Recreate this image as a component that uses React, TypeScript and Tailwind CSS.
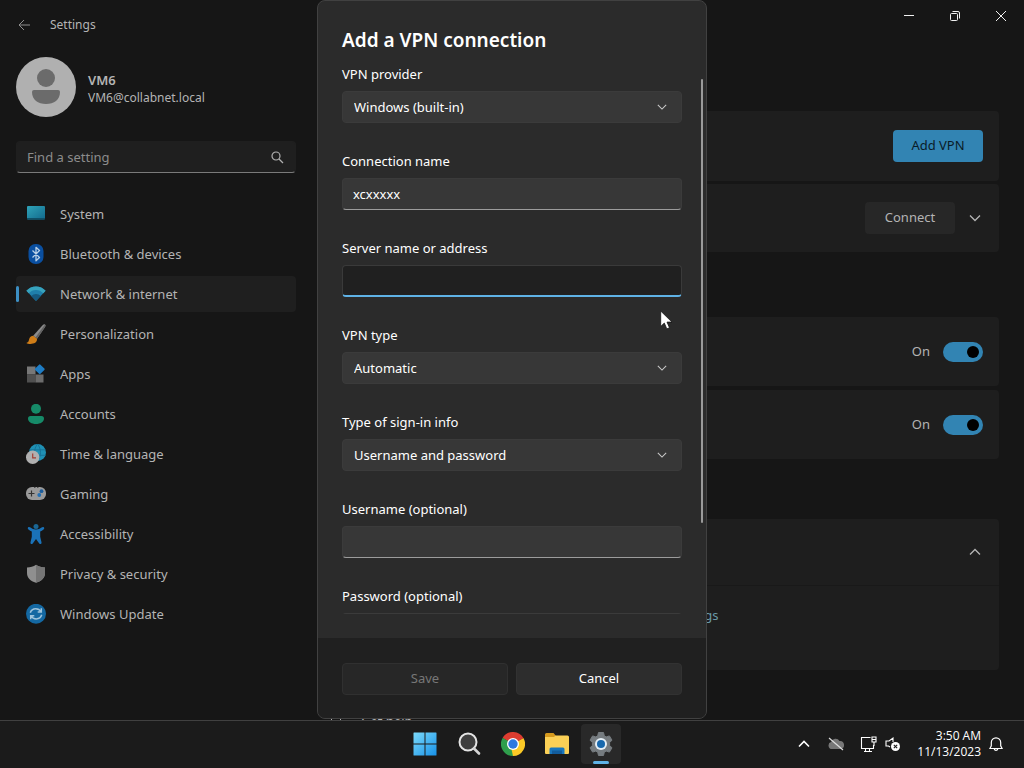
import { useState, type ReactNode } from "react";

const icons: Record<string, ReactNode> = {
  System: (
    <>
      <defs>
        <linearGradient id="sys" x1="0" y1="0" x2="1" y2="1">
          <stop offset="0" stopColor="#2fa3b8" />
          <stop offset="1" stopColor="#12698c" />
        </linearGradient>
      </defs>
      <rect x="1" y="2" width="18" height="13.5" rx="1" fill="url(#sys)" />
      <path d="M1 14h18v.8a.8.8 0 0 1-.8.8H1.800a.8.8 0 0 1-.8-.8z" fill="#0f4f66" />
    </>
  ),
  "Bluetooth & devices": (
    <>
      <rect x="2.500" y="0" width="15" height="20" rx="7" fill="#0a4fa0" />
      <path
        d="M6.500 6.500l7 7-3.500 3.200V3.300l3.500 3.200-7 7"
        fill="none"
        stroke="#b8cfe6"
        strokeWidth="1.300"
        strokeLinejoin="round"
      />
    </>
  ),
  "Network & internet": (
    <>
      <path d="M.4 6.800C3 3.800 6.300 2.400 10 2.400s7 1.400 9.600 4.400L10 17z" fill="#1f7fab" />
      <path d="M.4 6.800C3 3.800 6.300 2.400 10 2.400s7 1.400 9.600 4.400l-2.300 2.500C15.300 7.200 12.800 6 10 6S4.700 7.200 2.700 9.300z" fill="#37a3bd" />
      <path d="M5.200 12C6.500 10.700 8.100 10 10 10s3.500.7 4.800 2L10 17z" fill="#165a80" />
    </>
  ),
  Personalization: (
    <>
      <path d="M18.900.5c1 .7.600 1.800 0 2.800L11 14.800l-3.800-3L16.800 1c.7-.7 1.400-.9 2.100-.5z" fill="#8c8c8c" />
      <path d="M18.900.5c1 .7.600 1.800 0 2.800L11 14.800l-1.600-1.300z" fill="#636363" />
      <path d="M7.200 11.800l3.800 3c.4 3.400-3 5.200-6.500 5.200-1.800 0-3.200-.4-4.100-1.100 2.600-.7 2.200-2.300 3-4.400.7-1.700 2.100-2.600 3.800-2.700z" fill="#cf7d18" />
    </>
  ),
  Apps: (
    <>
      <rect x="1" y="2.500" width="8.500" height="8" fill="#777" />
      <rect x="1" y="10.500" width="8.500" height="8" fill="#505050" />
      <rect x="9.500" y="10.500" width="8" height="8" fill="#6c6c6c" />
      <rect x="10" y="1.500" width="7.500" height="7.500" rx="1" transform="rotate(45 13.750 5.250)" fill="#1e7cc4" />
    </>
  ),
  Accounts: (
    <>
      <circle cx="10" cy="4.800" r="5" fill="#168a68" />
      <path d="M4.500 12h11a2.500 2.500 0 0 1 2.500 2.500c0 3.300-3.500 5.500-8 5.500s-8-2.200-8-5.500A2.500 2.500 0 0 1 4.500 12z" fill="#168a68" />
    </>
  ),
  "Time & language": (
    <>
      <circle cx="11.500" cy="8.500" r="8.500" fill="#1f90b4" />
      <path d="M3.500 5.800h16M3.500 11.300h16M11.500 0c-4 5-4 12 0 17M11.500 0c4 5 4 12 0 17" fill="none" stroke="#156d92" strokeWidth=".8" />
      <circle cx="6.700" cy="13.300" r="6.700" fill="#b0b0b0" />
      <path d="M6.700 9.500v4.300H10" fill="none" stroke="#a33f33" strokeWidth="1.200" />
    </>
  ),
  Gaming: (
    <>
      <rect x="0" y="3" width="20" height="13" rx="6" fill="#9a9a9a" />
      <path d="M5.500 6.500v6M2.500 9.500h6" stroke="#333" strokeWidth="1.200" />
      <circle cx="15.500" cy="7.200" r="1.900" fill="#1c5d9c" />
      <circle cx="13.300" cy="11" r="1.900" fill="#2470b4" />
      <path d="M8 3.400h1.500M11 3.400h1.500" stroke="#444" />
    </>
  ),
  Accessibility: (
    <>
      <circle cx="10" cy="2.600" r="2.500" fill="#1a6694" />
      <path
        d="M2.200 3.200c.7-.5 1.500-.3 2.300.3C6 4.700 7.700 5.500 10 5.500s4-.8 5.500-2c.8-.6 1.600-.8 2.300-.3.700.7.500 1.600-.3 2.300-1.100.9-2.200 1.600-3.300 2.100v5.200l1.300 5.500c.2 1-.3 1.600-1.100 1.700-.8.100-1.400-.3-1.700-1.200L10 15l-2.700 3.800c-.3.900-.9 1.300-1.700 1.200-.8-.1-1.300-.7-1.100-1.700l1.300-5.500V7.600c-1.100-.5-2.200-1.200-3.300-2.100-.8-.7-1-1.600-.3-2.300z"
        fill="#1a72b8"
      />
    </>
  ),
  "Privacy & security": (
    <>
      <path d="M10 .8c2.600 1.800 5.600 2.700 9 2.800v5.300c0 4.600-3.300 8-9 9.900-5.700-1.900-9-5.300-9-9.900V3.600C4.400 3.500 7.400 2.600 10 .8z" fill="#8f8f8f" />
      <path d="M10 .8c2.600 1.800 5.600 2.700 9 2.800v5.300c0 4.600-3.300 8-9 9.900z" fill="#757575" />
    </>
  ),
  "Windows Update": (
    <>
      <circle cx="10" cy="9.800" r="10" fill="#1468a2" />
      <path
        d="M4.300 8.800C5 6.300 7.200 4.700 9.800 4.700c2.300 0 4.200 1.200 5.200 3M15.300 4.300v3.600h-3.600M15.700 10.800c-.7 2.500-2.900 4.100-5.500 4.100-2.300 0-4.200-1.200-5.200-3M4.700 15.300v-3.600h3.600"
        fill="none"
        stroke="#9fc4dc"
        strokeWidth="1.500"
      />
    </>
  ),
};

function Chevron({ up = false, size = 12 }: { up?: boolean; size?: number }) {
  return (
    <svg width={size} height={size} viewBox="0 0 12 12" fill="none" stroke="currentColor" strokeWidth="1.300">
      <path d={up ? "M1 8.500l5-5 5 5" : "M1 3.500l5 5 5-5"} />
    </svg>
  );
}

function SelectField({ id, label, options }: { id: string; label: string; options: string[] }) {
  return (
    <div className="mb-7">
      <label htmlFor={id} className="mb-[7px] block leading-5">
        {label}
      </label>
      <div className="relative">
        <select
          id={id}
          className="block h-8 w-full appearance-none rounded border border-[#3b3b3b] bg-[#373737] px-[11px] pt-px text-white outline-none"
        >
          {options.map((option) => (
            <option key={option}>{option}</option>
          ))}
        </select>
        <span className="pointer-events-none absolute inset-y-0 right-[15px] flex items-center text-[#c8c8c8]">
          <Chevron size={10} />
        </span>
      </div>
    </div>
  );
}

type TextFieldProps = {
  id: string;
  label: string;
  type?: string;
  value: string;
  active?: boolean;
  onChange: (value: string) => void;
};

function TextField({ id, label, type = "text", value, active = false, onChange }: TextFieldProps) {
  return (
    <div className="mb-7">
      <label htmlFor={id} className="mb-[7px] block leading-5">
        {label}
      </label>
      <input
        id={id}
        type={type}
        value={value}
        onChange={(e) => onChange(e.target.value)}
        className={`block h-8 w-full rounded border px-[10px] text-white outline-none ${
          active
            ? "border-[#3a3a3a] border-b-2 border-b-[#5fb2e6] bg-[#202020]"
            : "border-[#3b3b3b] border-b-[#9c9c9c] bg-[#373737]"
        }`}
      />
    </div>
  );
}

function Toggle({ id }: { id: string }) {
  const [on, setOn] = useState(true);

  return (
    <>
      <label htmlFor={id} className="mr-[13px]">
        {on ? "On" : "Off"}
      </label>
      <input
        id={id}
        type="checkbox"
        role="switch"
        checked={on}
        onChange={() => setOn(!on)}
        className="flex h-5 w-10 appearance-none items-center rounded-full bg-[#555] px-1 before:block before:size-3 before:rounded-full before:bg-black checked:justify-end checked:bg-[#3284b3]"
      />
    </>
  );
}

function Sidebar() {
  const [search, setSearch] = useState("");
  const [current, setCurrent] = useState("Network & internet");

  return (
    <aside className="w-[312px] shrink-0 px-4 text-[#b4b4b4]">
      <div className="flex h-12 items-center gap-5 pt-px">
        <button type="button" aria-label="Back" className="flex w-[14px] justify-end">
          <svg className="shrink-0" width="12" height="12" viewBox="0 0 12 12" fill="none" stroke="#8f8f8f">
            <path d="M12 6H1M6 1L1 6l5 5" />
          </svg>
        </button>
        <span className="text-xs">Settings</span>
      </div>

      <div className="mt-[9px] flex items-center gap-3">
        <svg width="60" height="60" viewBox="0 0 60 60">
          <circle cx="30" cy="30" r="30" fill="#b0b0b0" />
          <circle cx="30" cy="21" r="9" fill="#6b6b6b" />
          <path d="M18 33h24a2 2 0 0 1 2 2c0 8-6 12-14 12s-14-4-14-12a2 2 0 0 1 2-2z" fill="#6b6b6b" />
        </svg>
        <div className="pt-[2px]">
          <p className="leading-5 font-semibold">VM6</p>
          <p className="text-xs leading-4">VM6@collabnet.local</p>
        </div>
      </div>

      <div className="relative mt-6">
        <input
          type="search"
          aria-label="Find a setting"
          placeholder="Find a setting"
          value={search}
          onChange={(e) => setSearch(e.target.value)}
          className="block h-8 w-full rounded border border-[#1f1f1f] border-b-[#7a7a7a] bg-[#1f1f1f] px-[10px] outline-none placeholder:text-[#8c8c8c]"
        />
        <svg
          className="pointer-events-none absolute top-[10px] right-3"
          width="13"
          height="13"
          viewBox="0 0 13 13"
          fill="none"
          stroke="#b0b0b0"
          strokeWidth="1.200"
        >
          <circle cx="5" cy="5" r="4" />
          <path d="M8 8l4 4" />
        </svg>
      </div>

      <nav className="mt-[23px] flex flex-col gap-1">
        {Object.keys(icons).map((name) => (
          <a
            key={name}
            href="#"
            onClick={() => setCurrent(name)}
            className={`relative flex h-9 items-center gap-[14px] rounded px-[10px] ${
              name === current ? "bg-[#1f1f1f]" : ""
            }`}
          >
            {name === current && (
              <span className="absolute left-0 h-4 w-[3px] rounded-full bg-[#3c8fc4]" />
            )}
            <svg width="20" height="20" viewBox="0 0 20 20">
              {icons[name]}
            </svg>
            <span className="pt-px">{name}</span>
          </a>
        ))}
      </nav>
    </aside>
  );
}

function Content() {
  const card = "flex items-center justify-end rounded bg-[#1e1e1e]";

  return (
    <section className="min-w-0 flex-1 pr-[25px] pl-4 text-[#b4b4b4]">
      <div className="mt-[111px] flex flex-col gap-[3px]">
        <div className={`${card} h-[70px] pr-4`}>
          <button type="button" className="h-8 w-[90px] rounded bg-[#3284b3] text-[#0a1c28]">
            Add VPN
          </button>
        </div>
        <div className={`${card} h-[68px] pr-[18px]`}>
          <button type="button" className="h-8 w-[90px] rounded bg-[#272727]">
            Connect
          </button>
          <button type="button" aria-label="Show details" className="ml-[14px]">
            <Chevron />
          </button>
        </div>
      </div>

      <div className="mt-[65px] flex flex-col gap-1">
        <div className={`${card} h-[69px] pr-4`}>
          <Toggle id="metered" />
        </div>
        <div className={`${card} h-[69px] pr-4`}>
          <Toggle id="roaming" />
        </div>
      </div>

      <div className="mt-[60px] rounded bg-[#1e1e1e]">
        <div className="flex h-[67px] items-center justify-end border-b border-[#191919] pr-[18px]">
          <button type="button" aria-label="Hide details">
            <Chevron up />
          </button>
        </div>
        <div className="h-[84px] pt-5 pl-[313px]">
          <a href="#" className="text-[#6a9aa8]">
            VPN settings
          </a>
        </div>
      </div>

      <a href="#" className="mt-[42px] ml-[2px] flex items-center gap-[19px]">
        <svg width="12" height="16" viewBox="0 0 12 16" fill="none" stroke="currentColor">
          <path d="M1.500 15.500V3A2.500 2.500 0 0 1 4 .5h4A2.500 2.500 0 0 1 10.500 3v12.500z" />
        </svg>
        Get help
      </a>
    </section>
  );
}

function VpnDialog() {
  const [name, setName] = useState("xcxxxxx");
  const [server, setServer] = useState("");
  const [username, setUsername] = useState("");
  const [password, setPassword] = useState("");

  return (
    <div className="absolute inset-0 flex justify-center pb-px">
      <form
        role="dialog"
        aria-labelledby="vpn-title"
        onSubmit={(e) => e.preventDefault()}
        className="relative flex w-[390px] flex-col overflow-hidden rounded-lg border border-[#414141] bg-[#2b2b2b] text-white"
      >
        <h1 id="vpn-title" className="px-6 pt-[25px] text-[19px] leading-7 font-semibold">
          Add a VPN connection
        </h1>

        <div className="mt-[10px] mb-6 min-h-0 flex-1 overflow-y-auto px-6 [scrollbar-width:none]">
          <SelectField id="provider" label="VPN provider" options={["Windows (built-in)"]} />
          <TextField id="name" label="Connection name" value={name} onChange={setName} />
          <TextField id="server" label="Server name or address" value={server} active onChange={setServer} />
          <SelectField id="type" label="VPN type" options={["Automatic", "IKEv2", "SSTP", "PPTP"]} />
          <SelectField id="sign-in" label="Type of sign-in info" options={["Username and password", "Smart card", "Certificate"]} />
          <TextField id="username" label="Username (optional)" value={username} onChange={setUsername} />
          <TextField id="password" type="password" label="Password (optional)" value={password} onChange={setPassword} />
        </div>

        {/* scroll thumb */}
        <span className="absolute top-[78px] right-[3px] h-[444px] w-[2px] rounded-full bg-[#9a9a9a]" />

        <div className="grid grid-cols-2 gap-2 bg-[#202020] px-6 pt-[25px] pb-[23px]">
          <button type="submit" disabled className="h-8 rounded border border-[#303030] bg-[#272727] text-[#777]">
            Save
          </button>
          <button type="button" className="h-8 rounded border border-[#323232] bg-[#2d2d2d]">
            Cancel
          </button>
        </div>
      </form>
    </div>
  );
}

function WindowControls() {
  return (
    <div className="absolute top-0 right-0 flex text-[#f0f0f0]">
      <button type="button" aria-label="Minimize" className="flex h-8 w-[46px] items-center justify-center">
        <svg width="10" height="10" viewBox="0 0 10 10" stroke="currentColor">
          <path d="M0 4.500h10" />
        </svg>
      </button>
      <button type="button" aria-label="Restore" className="flex h-8 w-[46px] items-center justify-center">
        <svg width="10" height="10" viewBox="0 0 10 10" fill="none" stroke="currentColor">
          <rect x=".5" y="2.500" width="7" height="7" rx="1" />
          <path d="M2.500.5H8A1.500 1.500 0 0 1 9.500 2v5.500" />
        </svg>
      </button>
      <button type="button" aria-label="Close" className="flex h-8 w-[46px] items-center justify-center">
        <svg width="10" height="10" viewBox="0 0 10 10" stroke="currentColor">
          <path d="M0 0l10 10M10 0L0 10" />
        </svg>
      </button>
    </div>
  );
}

function Taskbar() {
  const app = "flex size-10 items-center justify-center rounded";

  return (
    <footer className="grid h-12 shrink-0 grid-cols-[1fr_auto_1fr] items-center border-t border-[#404040] bg-[#1b1b1b] pb-px pl-[2px] text-white">
      <div />
      <div className="flex gap-1">
        <button type="button" aria-label="Start" className={app}>
          <svg width="24" height="24" viewBox="0 0 24 24">
            <defs>
              <linearGradient id="win" x1="0" y1="0" x2="24" y2="24" gradientUnits="userSpaceOnUse">
                <stop offset="0" stopColor="#7edcfb" />
                <stop offset="1" stopColor="#1590e8" />
              </linearGradient>
            </defs>
            <path
              d="M1 .5h10.500v11H.5V1A.5.5 0 0 1 1 .5zM12.500.5H23a.5.5 0 0 1 .5.5v10.500h-11zM.5 12.500h11v11H1a.5.5 0 0 1-.5-.5zM12.500 12.500h11V23a.5.5 0 0 1-.5.5H12.500z"
              fill="url(#win)"
            />
          </svg>
        </button>
        <button type="button" aria-label="Search" className={app}>
          <svg width="24" height="24" viewBox="0 0 24 24">
            <circle cx="11" cy="10" r="8.500" fill="#3f3f3f" stroke="#e4e4e4" strokeWidth="2" />
            <path d="M17 16.500l5 5" stroke="#d4d4d4" strokeWidth="2.600" strokeLinecap="round" />
          </svg>
        </button>
        <button type="button" aria-label="Chrome" className={app}>
          <svg width="24" height="24" viewBox="0 0 24 24">
            <path d="M12 12L1.600 6A12 12 0 0 1 22.400 6z" fill="#dc3c30" />
            <path d="M12 12L22.400 6A12 12 0 0 1 12 24z" fill="#fbc926" />
            <path d="M12 12v12A12 12 0 0 1 1.600 6z" fill="#2f9e4c" />
            <path d="M12 6h10.400L12 12z" fill="#dc3c30" />
            <path d="M17.200 15L12 24l-2-9z" fill="#fbc926" />
            <path d="M6.800 15L1.600 6 12 12z" fill="#2f9e4c" />
            <circle cx="12" cy="12" r="6" fill="#fff" />
            <circle cx="12" cy="12" r="4.700" fill="#2f78e0" />
          </svg>
        </button>
        <button type="button" aria-label="File Explorer" className={app}>
          <svg width="24" height="24" viewBox="0 0 24 24">
            <path d="M0 2.500A1.500 1.500 0 0 1 1.500 1h7l2.500 3v5H0z" fill="#d69a1e" />
            <path d="M0 5h9l1.500-1.500h12A1.500 1.500 0 0 1 24 5v16a1 1 0 0 1-1 1H1a1 1 0 0 1-1-1z" fill="#fbd056" />
            <path d="M4.500 22v-5A1.500 1.500 0 0 1 6 15.500h12a1.500 1.500 0 0 1 1.500 1.500v5z" fill="#1976bd" />
            <path d="M7 18.500h10v3.500H7z" fill="#125c9c" />
          </svg>
        </button>
        <button type="button" aria-label="Settings" className={`${app} relative bg-[#292929]`}>
          <svg width="24" height="24" viewBox="0 0 24 24">
            <path
              d="M9.500.5h5l.8 3.300 1.900 1.100 3.200-1L23 8.200l-2.400 2.300v3L23 15.800l-2.600 4.300-3.200-1-1.900 1.100-.8 3.300h-5l-.8-3.300-1.900-1.100-3.200 1L1 15.800l2.400-2.300v-3L1 8.200l2.600-4.300 3.200 1 1.900-1.100z"
              fill="#767c80"
              stroke="#767c80"
              strokeLinejoin="round"
            />
            <circle cx="12" cy="12" r="6" fill="#e4eef5" />
            <circle cx="12" cy="12" r="4" fill="#1768ad" />
          </svg>
          <span className="absolute bottom-0 h-[3px] w-4 rounded-full bg-[#5fb2e6]" />
        </button>
      </div>

      <div className="flex items-center justify-end pr-[21px]">
        <button type="button" aria-label="Show hidden icons" className="mr-[18px]">
          <svg width="12" height="12" viewBox="0 0 12 12" fill="none" stroke="#fff" strokeWidth="1.600">
            <path d="M1 8.500l5-5 5 5" />
          </svg>
        </button>
        <button type="button" aria-label="OneDrive" className="mr-4">
          <svg width="16" height="14" viewBox="0 0 16 14">
            <path d="M4 12a3.500 3.500 0 0 1-.8-6.900A4.500 4.500 0 0 1 11.500 4 4 4 0 0 1 12.500 12z" fill="#777" />
            <path d="M1 1l14 12" stroke="#ddd" strokeWidth="1.200" />
          </svg>
        </button>
        <button type="button" aria-label="Network" className="mr-2">
          <svg width="17" height="17" viewBox="0 0 17 17" fill="none" stroke="#fff" strokeWidth="1.100">
            <path d="M10.500 1.500h-9v11h12V9M4 15.500h8M5.500 12.500v3M9.500 12.500v3" />
            <path d="M12 1h4v5h-4zM12 3.500h4M14 6v4" />
          </svg>
        </button>
        <button type="button" aria-label="Volume" className="mr-4">
          <svg width="16" height="16" viewBox="0 0 16 16" fill="none" stroke="#fff" strokeWidth="1.100">
            <path d="M8 6V2L4 5H1v5h2.500l1.500 1" />
            <circle cx="10.500" cy="10.500" r="4.500" fill="#fff" stroke="none" />
            <path d="M8.800 8.800l3.400 3.400M12.200 8.800l-3.400 3.400" stroke="#1b1b1b" />
          </svg>
        </button>
        <div className="mr-2 text-right font-['Open_Sans',sans-serif] text-xs leading-4">
          <p>3:50 AM</p>
          <p>11/13/2023</p>
        </div>
        <button type="button" aria-label="Notifications">
          <svg width="14" height="15" viewBox="0 0 14 15" fill="none" stroke="#fff" strokeWidth="1.200">
            <path d="M7 .8a4.700 4.700 0 0 0-4.700 4.700v3.300L.9 11.500h12.200l-1.400-2.700V5.500A4.700 4.700 0 0 0 7 .8zM5.200 12a1.900 1.900 0 0 0 3.600 0" />
          </svg>
        </button>
      </div>
    </footer>
  );
}

export default function App() {
  return (
    <div className="relative flex h-screen flex-col overflow-hidden bg-[#161616] font-['Noto_Sans','Open_Sans',sans-serif] text-[13px]">
      <main className="relative flex min-h-0 flex-1 overflow-hidden">
        <Sidebar />
        <Content />
        <WindowControls />
        <VpnDialog />
      </main>
      <Taskbar />

      {/* mouse pointer */}
      <svg className="pointer-events-none absolute top-[310px] left-[660px]" width="13" height="20" viewBox="0 0 13 20">
        <path d="M.7 1v15.500l3.600-3.400 2.500 5.800 2.700-1.200L7 12.100h5z" fill="#fff" stroke="#111" strokeWidth=".8" />
      </svg>
    </div>
  );
}
